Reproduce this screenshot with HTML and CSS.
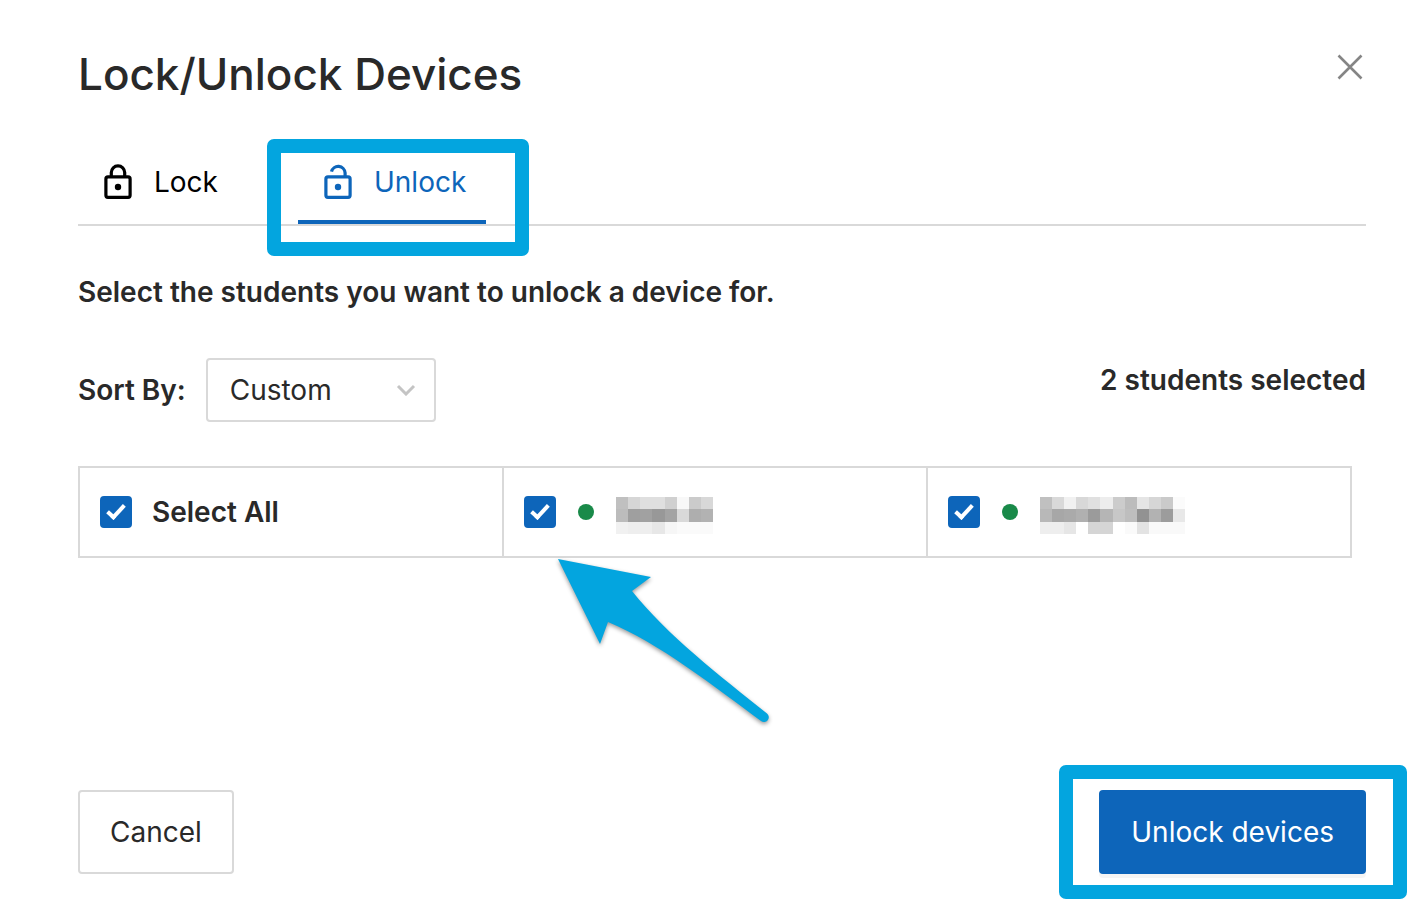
FILE: index.html
```html
<!DOCTYPE html>
<html lang="en">
<head>
	<meta charset="utf-8">
	<title>Lock/Unlock Devices</title>
	<link rel="stylesheet" href="styles.css">
</head>
<body>
<main class="dialog">
  <header class="dialog-header">
    <h1>Lock/Unlock Devices</h1>
    <button class="close" type="button" aria-label="Close">
      <svg width="26" height="26" viewBox="0 0 26 26"><path d="M1.5 1.5l23 23M24.5 1.5l-23 23"/></svg>
    </button>
  </header>

  <div class="tabs" role="tablist">
    <button class="tab" type="button" role="tab" aria-selected="false">
      <svg width="40" height="40" viewBox="0 0 40 40">
        <rect x="7.9" y="14.9" width="24.2" height="20.4" rx="2"/>
        <path d="M13.3 14.9v-4.4a6.7 6.7 0 0 1 13.4 0v4.4"/>
        <circle cx="20" cy="25" r="3.2"/>
      </svg>
      Lock
    </button>
    <button class="tab active" type="button" role="tab" aria-selected="true">
      <svg width="40" height="40" viewBox="0 0 40 40">
        <rect x="7.9" y="14.9" width="24.2" height="20.4" rx="2"/>
        <path d="M13.500 9.700a6.900 6.900 0 0 1 13.600 1.200v4"/>
        <circle cx="20" cy="25" r="3.2"/>
      </svg>
      Unlock
      <span class="highlight tab-highlight"></span>
    </button>
  </div>

  <p class="instructions">Select the students you want to unlock a device for.</p>

  <div class="toolbar">
    <div class="sort">
      <label for="sort">Sort By:</label>
      <div class="select">
        <select id="sort">
          <option>Custom</option>
        </select>
        <svg width="20" height="12" viewBox="0 0 20 12"><path d="M2 2l8 8 8-8"/></svg>
      </div>
    </div>
    <p class="count">2 students selected</p>
  </div>

  <div class="students">
    <label class="student">
      <input type="checkbox" checked>
      Select All
    </label>
    <label class="student">
      <input type="checkbox" aria-label="First student" checked>
      <span class="status"></span>
      <svg class="name" width="97" height="37" viewBox="0 0 8 3" preserveAspectRatio="none" shape-rendering="crispEdges">
        <path fill="#c0c0c0" d="M0 0h1v1H0z"/><path fill="#d6d6d6" d="M1 0h1v1H1z"/><path fill="#dfdfdf" d="M2 0h2v1H2z"/><path fill="#d0d0d0" d="M4 0h1v1H4z"/><path fill="#f8f8f8" d="M5 0h1v1H5z"/><path fill="#cbcbcb" d="M6 0h1v1H6z"/><path fill="#d8d8d8" d="M7 0h1v1H7z"/>
        <path fill="#bcbcbc" d="M0 1h1v1H0z"/><path fill="#9f9f9f" d="M1 1h1v1H1z"/><path fill="#a1a1a1" d="M2 1h1v1H2z"/><path fill="#989898" d="M3 1h1v1H3z"/><path fill="#a3a3a3" d="M4 1h1v1H4z"/><path fill="#d9d9d9" d="M5 1h1v1H5z"/><path fill="#aeaeae" d="M6 1h1v1H6z"/><path fill="#b2b2b2" d="M7 1h1v1H7z"/>
        <path fill="#f1f1f1" d="M0 2h1v1H0z"/><path fill="#eee" d="M1 2h2v1H1z"/><path fill="#e7e7e7" d="M3 2h1v1H3z"/><path fill="#f6f6f6" d="M4 2h1v1H4z"/><path fill="#fafafa" d="M5 2h3v1H5z"/>
      </svg>
      <svg class="arrow" width="220" height="180" viewBox="0 0 220 180"><path d="M3 4L96 22 77 36C112 80 164 120 212 158.500A4.500 4.500 0 0 1 206 166C160 132 104 88 53 67L45 89Z"/></svg>
    </label>
    <label class="student">
      <input type="checkbox" aria-label="Second student" checked>
      <span class="status"></span>
      <svg class="name" width="145" height="37" viewBox="0 0 12 3" preserveAspectRatio="none" shape-rendering="crispEdges">
        <path fill="#c0c0c0" d="M0 0h1v1H0z"/><path fill="#d9d9d9" d="M1 0h1v1H1z"/><path fill="#f1f1f1" d="M2 0h1v1H2z"/><path fill="#d8d8d8" d="M3 0h1v1H3z"/><path fill="#e0e0e0" d="M4 0h1v1H4z"/><path fill="#ededed" d="M5 0h1v1H5z"/><path fill="#ccc" d="M6 0h1v1H6z"/><path fill="#bcbcbc" d="M7 0h1v1H7z"/><path fill="#e5e5e5" d="M8 0h1v1H8z"/><path fill="#d6d6d6" d="M9 0h1v1H9z"/><path fill="#cacaca" d="M10 0h1v1h-1z"/><path fill="#fbfbfb" d="M11 0h1v1h-1z"/>
        <path fill="#b8b8b8" d="M0 1h1v1H0z"/><path fill="#a7a7a7" d="M1 1h1v1H1z"/><path fill="#aaa" d="M2 1h1v1H2z"/><path fill="#b0b0b0" d="M3 1h1v1H3z"/><path fill="#9b9b9b" d="M4 1h1v1H4z"/><path fill="#b5b5b5" d="M5 1h1v1H5z"/><path fill="#c7c7c7" d="M6 1h1v1H6z"/><path fill="#bebebe" d="M7 1h1v1H7z"/><path fill="#929292" d="M8 1h1v1H8z"/><path fill="#b2b2b2" d="M9 1h1v1H9z"/><path fill="#9c9c9c" d="M10 1h1v1h-1z"/><path fill="#e8e8e8" d="M11 1h1v1h-1z"/>
        <path fill="#eee" d="M0 2h2v1H0z"/><path fill="#e6e6e6" d="M2 2h1v1H2z"/><path fill="#d5d5d5" d="M4 2h2v1H4z"/><path fill="#fafafa" d="M7 2h1v1H7z"/><path fill="#e3e3e3" d="M8 2h1v1H8z"/><path fill="#f9f9f9" d="M9 2h3v1H9z"/>
      </svg>
    </label>
  </div>

  <footer class="dialog-footer">
    <button class="btn" type="button">Cancel</button>
    <button class="btn primary" type="button">
      Unlock devices
      <span class="highlight btn-highlight"></span>
    </button>
  </footer>
</main>
</body>
</html>
```
FILE: styles.css
```css
* {
  box-sizing: border-box;
}

body {
  margin: 0;
  background: #fff;
  color: #292929;
  font-family: Inter, sans-serif;
  font-size: 28px;
  line-height: 44px;
}

h1, p {
  margin: 0;
}

button, select {
  font: inherit;
  color: inherit;
  background: none;
  border: 0;
  padding: 0;
  cursor: pointer;
}

svg {
  display: block;
  flex: none;
}

.dialog {
  display: flex;
  flex-direction: column;
  min-height: 100vh;
  padding: 46px 60px 36px 78px;
}

.dialog-header {
  display: flex;
  justify-content: space-between;
  align-items: flex-start;
  margin-bottom: 42px;
}

h1 {
  font-size: 44px;
  font-weight: 500;
  line-height: 56px;
}

.close {
  padding: 8px 3px;
}

.close svg {
  fill: none;
  stroke: #858585;
  stroke-width: 2.6;
}

/* tabs */
.tabs {
  display: flex;
  gap: 60px;
  border-bottom: 2px solid #d9d9d9;
}

.tab {
  position: relative;
  display: flex;
  align-items: center;
  gap: 16px;
  height: 80px;
  padding: 0 20px;
  border-bottom: 4px solid transparent;
  color: #000;
}

.tab svg {
  fill: none;
  stroke: currentColor;
  stroke-width: 3.2;
}

.tab circle {
  fill: currentColor;
  stroke: none;
}

.tab.active {
  color: #0d65ba;
  border-color: #0d65ba;
}

/* the outer edge is rounded, the inner one stays square */
.highlight {
  position: absolute;
  border: 14px solid #03a5df;
  border-radius: 7px;
  pointer-events: none;
}

.tab-highlight {
  inset: -5px -43px -36px -31px;
}

.btn-highlight {
  inset: -27px -43px -27px -42px;
}

.instructions, .sort label, .count, .student {
  font-weight: 600;
}

.instructions {
  margin-top: 44px;
}

.toolbar {
  display: flex;
  justify-content: space-between;
  align-items: flex-start;
  margin: 44px 0;
}

.sort {
  display: flex;
  align-items: center;
  gap: 20px;
}

.select {
  position: relative;
}

.select select {
  appearance: none;
  display: block;
  width: 230px;
  height: 64px;
  padding: 0 22px;
  border: 2px solid #d9d9d9;
  border-radius: 4px;
}

.select svg {
  position: absolute;
  right: 20px;
  top: 26px;
  fill: none;
  stroke: #c4c4c4;
  stroke-width: 3;
  pointer-events: none;
}

/* students */
.students {
  display: grid;
  grid-template-columns: repeat(3, 1fr);
  margin-right: 14px;
  border: solid #d9d9d9;
  border-width: 2px 2px 2px 0;
}

.student {
  position: relative;
  display: flex;
  align-items: center;
  gap: 20px;
  height: 88px;
  padding: 0 20px;
  border-left: 2px solid #d9d9d9;
}

.student input {
  appearance: none;
  flex: none;
  display: grid;
  place-items: center;
  width: 32px;
  height: 32px;
  margin: 0;
  border: 2px solid #d9d9d9;
  border-radius: 4px;
}

.student input:checked {
  background: #0d65ba;
  border-color: #0d65ba;
}

.student input:checked::before {
  content: "";
  box-sizing: border-box;
  width: 10px;
  height: 18px;
  margin-bottom: 4px;
  border: solid #fff;
  border-width: 0 4px 4px 0;
  transform: rotate(43deg);
}

.status {
  width: 16px;
  height: 16px;
  margin: 0 2px;
  border-radius: 50%;
  background: #198a49;
}

.name {
  margin-top: 6px;
}

.arrow {
  position: absolute;
  left: 51px;
  top: 87px;
  fill: #03a5df;
  filter: drop-shadow(0 2px 2px rgba(0, 0, 0, .4));
  pointer-events: none;
}

.dialog-footer {
  display: flex;
  justify-content: space-between;
  margin-top: auto;
}

.btn {
  position: relative;
  height: 84px;
  padding: 0 30px;
  border: 2px solid #d9d9d9;
  border-radius: 4px;
}

.primary {
  color: #fff;
  background: #0d65ba;
  border-color: #0d65ba;
  box-shadow: 0 4px 0 rgba(0, 0, 0, .04);
}
```
